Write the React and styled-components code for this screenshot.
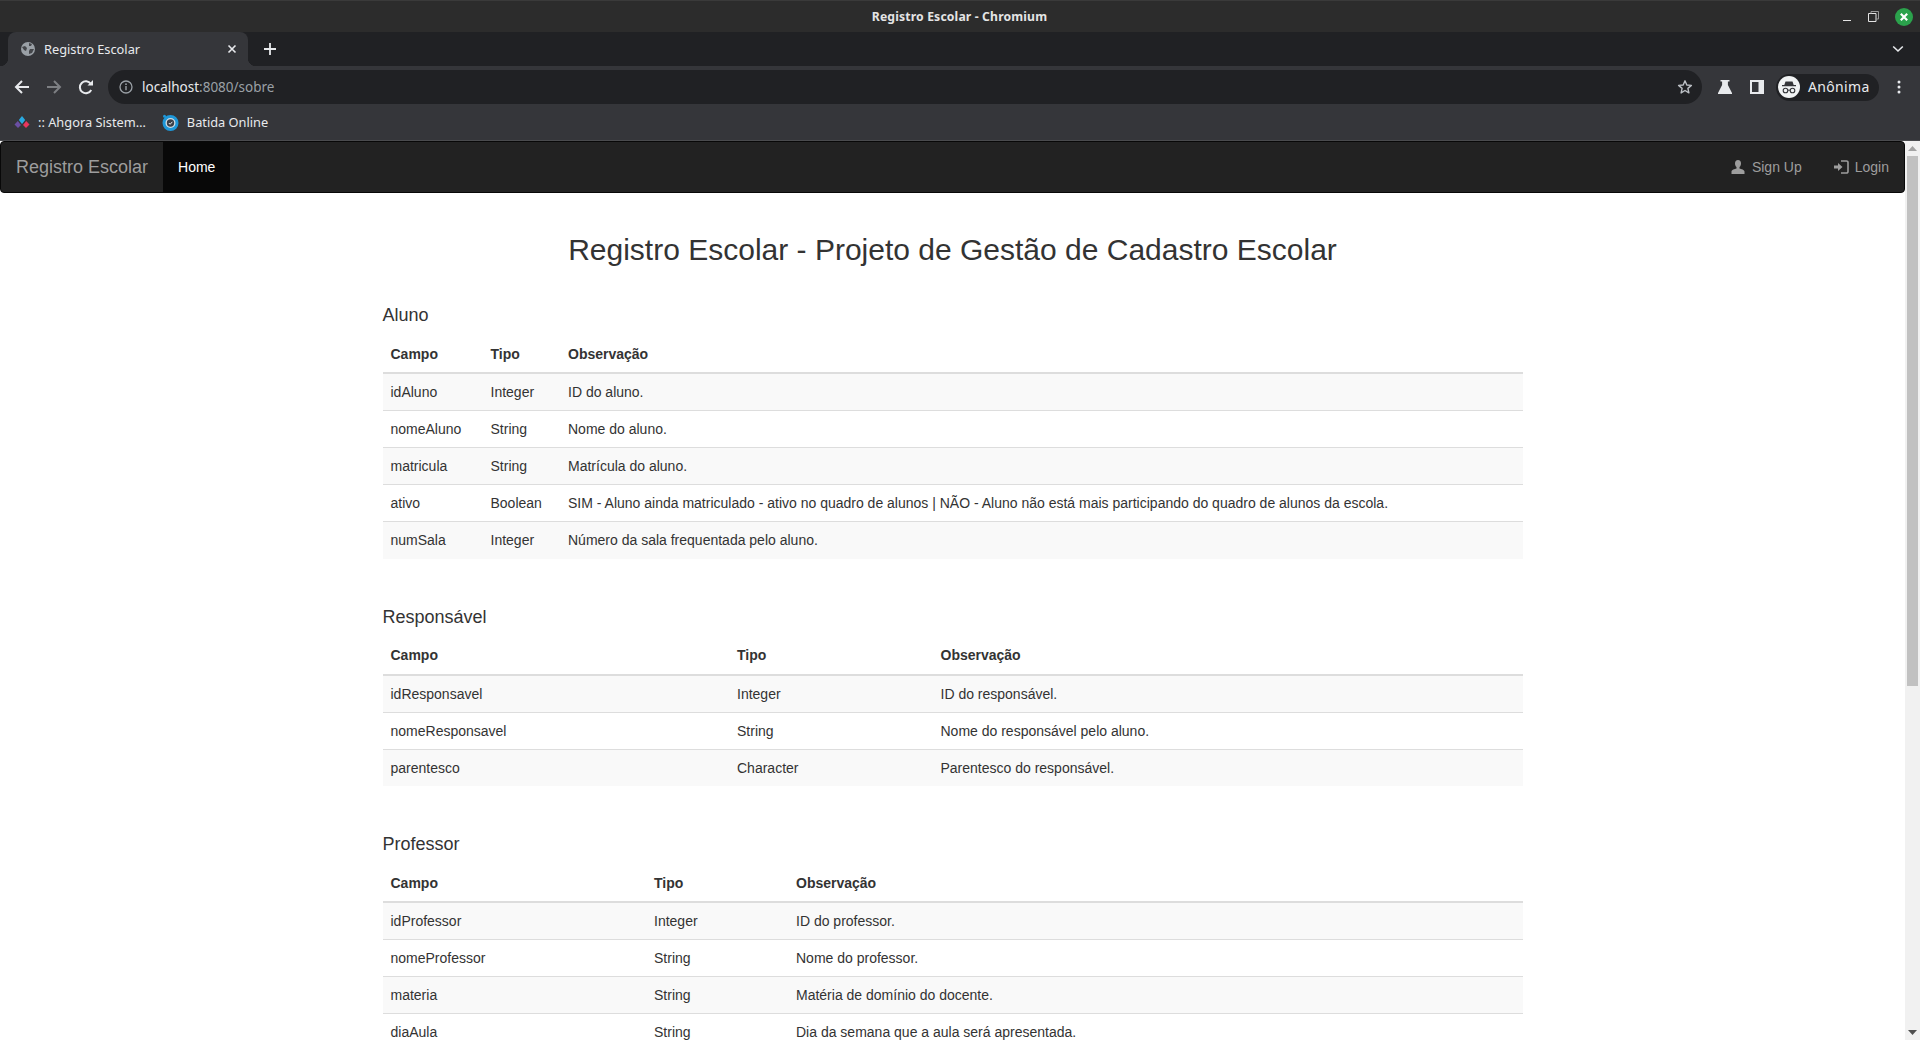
import React from "react";
import styled, { createGlobalStyle } from "styled-components";

const Global = createGlobalStyle`
  html, body { margin: 0; padding: 0; height: 1040px; overflow: hidden; background: #fff; }
  * { box-sizing: border-box; }
`;

const Root = styled.div`
  width: 1920px; height: 1040px; display: flex; flex-direction: column; overflow: hidden;
`;
const UI = `"Noto Sans", "Open Sans", "DejaVu Sans", sans-serif`;

const TitleBar = styled.div`
  height: 32px; flex: none; background: #2c2c2c; border-top: 1px solid #3a3a3a;
  display: grid; grid-template-columns: 1fr auto 1fr; align-items: center;
  color: #e4e4e4; font: 700 12.2px ${UI};
`;
const WindowTitle = styled.div`grid-column: 2; margin-left: -1px; letter-spacing: .15px; padding-bottom: 1px;`;
const WindowButtons = styled.div`
  grid-column: 3; justify-self: end; display: flex; align-items: center; gap: 16px; padding-right: 7px;
`;
const TabStrip = styled.div`
  height: 34px; flex: none; background: #202124; display: flex; align-items: center; padding-left: 8px; padding-right: 16px;
`;
const Tab = styled.div`
  width: 240px; height: 34px; background: #35363a; border-radius: 8px 8px 0 0; position: relative;
  display: flex; align-items: center; padding: 0 11px 0 13px; gap: 9px;
  color: #e8eaed; font: 400 12.8px ${UI};
  &::before, &::after { content: ""; position: absolute; bottom: 0; width: 8px; height: 8px; }
  &::before { left: -8px; background: radial-gradient(circle at 0 0, transparent 8px, #35363a 8.5px); }
  &::after { right: -8px; background: radial-gradient(circle at 100% 0, transparent 8px, #35363a 8.5px); }
`;
const TabLabel = styled.span`flex: 1;`;
const NewTab = styled.div`margin-left: 16px; display: flex;`;
const TabList = styled.div`margin-left: auto; display: flex;`;

const Toolbar = styled.div`
  height: 40px; flex: none; background: #35363a; display: flex; align-items: flex-start; padding: 4px 0 0 6px;
`;
const NavBtn = styled.div`
  width: 32px; height: 34px; display: flex; align-items: center; justify-content: center; flex: none;
`;
const Omnibox = styled.div`
  width: 1594px; margin-left: 6px; height: 34px; flex: none; background: #202124; border-radius: 17px;
  display: flex; align-items: center; padding: 0 9px 1px 11px; font: 400 13.5px ${UI};
`;
const Host = styled.span`color: #e8eaed; margin-left: 9px;`;
const Rest = styled.span`color: #9aa0a6; flex: 1;`;
const ToolIcons = styled.div`display: flex; align-items: center; height: 34px; flex: none; margin-left: 7px;`;
const IconSlot = styled.div`
  width: ${p => p.$w || 32}px; height: 34px; display: flex; align-items: center; justify-content: center; flex: none;
`;
const Profile = styled.div`
  width: 103px; height: 27px; flex: none; background: #202124; border-radius: 14px; margin-left: 3px;
  display: flex; align-items: center; padding: 0 0 1px 2px; gap: 8px; color: #e8eaed; font: 400 14px ${UI}; letter-spacing: .35px;
`;
const Bookmarks = styled.div`
  height: 35px; flex: none; background: #35363a; border-bottom: 1px solid #4a4b4e; display: flex; align-items: center; padding: 0 0 2px 14px;
  color: #e8eaed; font: 400 12.8px ${UI};
`;
const Bookmark = styled.div`
  display: flex; align-items: center; gap: ${p => p.$gap}px; margin-right: ${p => p.$mr || 0}px;
`;

const Viewport = styled.div`flex: 1; min-height: 0; display: flex;`;
const Page = styled.div`
  width: 1905px; overflow: hidden; background: #fff; color: #333;
  font: 400 14px/20px "Liberation Sans", Arial, sans-serif;
`;
const Navbar = styled.nav`
  height: 52px; background: #222; border: 1px solid #080808; border-radius: 4px; margin-bottom: 20px;
  display: flex; align-items: stretch;
`;
const Brand = styled.a`
  padding: 15px; font-size: 18px; line-height: 20px; color: #9d9d9d;
`;
const Active = styled.a`
  padding: 15px; color: #fff; background: #080808; line-height: 20px;
`;
const NavRight = styled.div`margin-left: auto; display: flex;`;
const NavLink = styled.a`
  padding: 15px; color: #9d9d9d; display: flex; align-items: center; gap: ${p => p.$gap}px; line-height: 20px;
  margin-right: ${p => p.$mr || 0}px;
`;
const Container = styled.main`
  width: 1170px; margin: 0 auto; padding: 20px 15px 0;
`;
const Title = styled.h2`
  font: 500 30px/33px "Liberation Sans", Arial, sans-serif; text-align: center; margin: 0 0 39px; color: #333;
`;
const Section = styled.section`
  margin-bottom: 48px;
`;
const SectionTitle = styled.h4`
  font: 500 18px/20px "Liberation Sans", Arial, sans-serif; margin: 0 0 10px; color: #333;
`;
const Table = styled.table`
  width: 100%; border-collapse: collapse; border-spacing: 0; table-layout: fixed;
`;
const Th = styled.th`
  text-align: left; padding: 8px; font-weight: 700; border-bottom: 2px solid #ddd; height: 38px;
  width: ${p => (p.$w ? `${p.$w}px` : "auto")};
`;
const Tr = styled.tr`
  &:nth-child(odd) { background: #f9f9f9; }
`;
const Td = styled.td`
  padding: 8px; border-top: 1px solid #ddd; height: 37px;
  tr:first-child > & { border-top: 0; height: 36px; }
`;

const Scrollbar = styled.div`
  width: 15px; flex: none; background: #f1f1f1; display: flex; flex-direction: column; align-items: center;
`;
const ArrowBox = styled.div`height: 15px; flex: none; display: flex; align-items: center; justify-content: center;`;
const Thumb = styled.div`width: 11px; height: 530px; background: #c1c1c1; flex: none;`;
const Spacer = styled.div`flex: 1;`;

const Globe = () => (
  <svg width="14" height="14" viewBox="0 0 14 14">
    <circle cx="7" cy="7" r="7" fill="#9aa0a6" />
    <path d="M1 5 L4 4 L6 6 L5 9 L3 8 Z M8 1 L11 2 L10 4 L8 4 Z M9 7 L13 7 L11 11 L8 12 L8 9 Z" fill="#35363a" opacity=".85" />
  </svg>
);
const Arrow = ({ color, flip }) => (
  <svg width="16" height="16" viewBox="0 0 16 16" style={flip ? { transform: "scaleX(-1)" } : undefined}>
    <path d="M15 8H2M8 2 2 8l6 6" stroke={color} strokeWidth="2" fill="none" />
  </svg>
);
const Reload = () => (
  <svg width="16" height="16" viewBox="0 0 16 16">
    <path d="M13.2 11a6 6 0 1 1-.4-6.2" stroke="#e8eaed" strokeWidth="2" fill="none" />
    <path d="M9.5 6.5H15V1z" fill="#e8eaed" />
  </svg>
);
const Info = () => (
  <svg width="14" height="14" viewBox="0 0 14 14">
    <circle cx="7" cy="7" r="6" stroke="#9aa0a6" strokeWidth="1.3" fill="none" />
    <path d="M7 6v4.2" stroke="#9aa0a6" strokeWidth="1.4" />
    <circle cx="7" cy="4.2" r=".9" fill="#9aa0a6" />
  </svg>
);
const Star = () => (
  <svg width="16" height="16" viewBox="0 0 16 16">
    <path d="M8 1.8l1.8 4.2 4.6.4-3.5 3 1 4.5L8 11.5l-3.900 2.400 1-4.500-3.500-3 4.600-.4z" stroke="#bdc1c6" strokeWidth="1.4" fill="none" strokeLinejoin="round" />
  </svg>
);
const Flask = () => (
  <svg width="16" height="16" viewBox="0 0 16 16">
    <path d="M3.500 1h9v1.500h-1.600v3.600L15 14v1H1v-1l4.100-7.900V2.500H3.500z" fill="#e8eaed" />
  </svg>
);
const SidePanel = () => (
  <svg width="14" height="14" viewBox="0 0 14 14">
    <path d="M0 0h14v14H0z" fill="#e8eaed" />
    <path d="M2 2h6.500v10H2z" fill="#35363a" />
  </svg>
);
const Incognito = () => (
  <svg width="22" height="22" viewBox="0 0 22 22">
    <circle cx="11" cy="11" r="11" fill="#f1f3f4" />
    <path d="M7.500 5.500h7l1.200 3.600H18v1.100H4V9.100h2.300z" fill="#35363a" />
    <circle cx="7.500" cy="14.500" r="2.300" stroke="#35363a" strokeWidth="1.100" fill="none" />
    <circle cx="14.500" cy="14.500" r="2.300" stroke="#35363a" strokeWidth="1.100" fill="none" />
    <path d="M9.800 14.200h2.400" stroke="#35363a" strokeWidth="1" />
  </svg>
);
const Kebab = () => (
  <svg width="4" height="14" viewBox="0 0 4 14">
    <circle cx="2" cy="2" r="1.500" fill="#e8eaed" /><circle cx="2" cy="7" r="1.500" fill="#e8eaed" /><circle cx="2" cy="12" r="1.500" fill="#e8eaed" />
  </svg>
);
const Plus = () => (
  <svg width="12" height="12" viewBox="0 0 12 12"><path d="M6 0v12M0 6h12" stroke="#e8eaed" strokeWidth="1.800" /></svg>
);
const CloseX = () => (
  <svg width="10" height="10" viewBox="0 0 10 10"><path d="M1.500 1.500l7 7M8.500 1.500l-7 7" stroke="#e8eaed" strokeWidth="1.600" /></svg>
);
const Chevron = () => (
  <svg width="12" height="8" viewBox="0 0 12 8"><path d="M1.200 1.500 6 6l4.800-4.500" stroke="#e8eaed" strokeWidth="1.600" fill="none" /></svg>
);
const Minimize = () => (
  <svg width="10" height="10" viewBox="0 0 10 10"><path d="M1 8.500h8" stroke="#e4e4e4" strokeWidth="1" /></svg>
);
const Restore = () => (
  <svg width="11" height="11" viewBox="0 0 11 11">
    <path d="M.5 2.500h7.500v8H.5z" stroke="#e4e4e4" fill="none" />
    <path d="M3 2.500V.5h7.500v7.500H8" stroke="#9a9a9a" fill="none" />
  </svg>
);
const GreenClose = () => (
  <svg width="18" height="18" viewBox="0 0 18 18">
    <circle cx="9" cy="9" r="9" fill="#2ba24c" />
    <path d="M5.800 5.800l6.400 6.400M12.200 5.800l-6.400 6.400" stroke="#fff" strokeWidth="2.200" />
  </svg>
);
const Ahgora = () => (
  <svg width="16" height="14" viewBox="0 0 16 14">
    <path d="M8 1l3.200 4-3.200 4-3.200-4z" fill="#29a9e0" />
    <path d="M3.800 6 7 10 4 13 .5 9.500z" fill="#6a4fa3" />
    <path d="M12.200 6 15.500 9.500 12 13 9 10z" fill="#e8365d" />
  </svg>
);
const Batida = () => (
  <svg width="17" height="17" viewBox="0 0 17 17">
    <circle cx="8.500" cy="9" r="6.500" stroke="#1e97d8" strokeWidth="3" fill="#d5dde3" />
    <circle cx="2.500" cy="2.200" r="1.500" fill="#1e97d8" />
    <circle cx="8.500" cy="9" r="3.700" fill="#3a3f47" />
    <path d="M6.800 9l1.300 1.300 2.300-2.500" stroke="#e8eaed" strokeWidth="1" fill="none" />
  </svg>
);
const UserGlyph = () => (
  <svg width="14" height="14" viewBox="0 0 14 14">
    <path d="M7 0c2 0 3 1.500 3 3.500 0 1.500-.6 2.900-1.500 3.600v1.300c1.800.6 5 1.300 5 3.100V14H.5v-2.500c0-1.800 3.200-2.500 5-3.100V7.100C4.600 6.400 4 5 4 3.500 4 1.500 5 0 7 0z" fill="#9d9d9d" />
  </svg>
);
const LoginGlyph = () => (
  <svg width="15" height="14" viewBox="0 0 15 14">
    <path d="M0 5.500h4V3l4.500 4L4 11V8.500H0z" fill="#9d9d9d" />
    <path d="M7 1h5.500A1.500 1.500 0 0 1 14 2.500v9a1.500 1.500 0 0 1-1.500 1.500H7" stroke="#9d9d9d" strokeWidth="1.600" fill="none" />
  </svg>
);
const SbArrow = ({ down, color }) => (
  <svg width="9" height="5" viewBox="0 0 9 5">
    <path d={down ? "M0 0h9L4.500 5z" : "M0 5h9L4.500 0z"} fill={color} />
  </svg>
);

const sections = [
  {
    title: "Aluno", w: [100, 77.5],
    rows: [
      ["idAluno", "Integer", "ID do aluno."],
      ["nomeAluno", "String", "Nome do aluno."],
      ["matricula", "String", "Matrícula do aluno."],
      ["ativo", "Boolean", "SIM - Aluno ainda matriculado - ativo no quadro de alunos | NÃO - Aluno não está mais participando do quadro de alunos da escola."],
      ["numSala", "Integer", "Número da sala frequentada pelo aluno."],
    ],
  },
  {
    title: "Responsável", w: [346.5, 203.5],
    rows: [
      ["idResponsavel", "Integer", "ID do responsável."],
      ["nomeResponsavel", "String", "Nome do responsável pelo aluno."],
      ["parentesco", "Character", "Parentesco do responsável."],
    ],
  },
  {
    title: "Professor", w: [263.5, 142],
    rows: [
      ["idProfessor", "Integer", "ID do professor."],
      ["nomeProfessor", "String", "Nome do professor."],
      ["materia", "String", "Matéria de domínio do docente."],
      ["diaAula", "String", "Dia da semana que a aula será apresentada."],
    ],
  },
];

export default function App() {
  return (
    <Root>
      <Global />
      <TitleBar>
        <WindowTitle>Registro Escolar - Chromium</WindowTitle>
        <WindowButtons><Minimize /><Restore /><GreenClose /></WindowButtons>
      </TitleBar>
      <TabStrip>
        <Tab><Globe /><TabLabel>Registro Escolar</TabLabel><CloseX /></Tab>
        <NewTab><Plus /></NewTab>
        <TabList><Chevron /></TabList>
      </TabStrip>
      <Toolbar>
        <NavBtn><Arrow color="#e8eaed" /></NavBtn>
        <NavBtn><Arrow color="#7d7f83" flip /></NavBtn>
        <NavBtn><Reload /></NavBtn>
        <Omnibox>
          <Info />
          <Host>localhost</Host><Rest>:8080/sobre</Rest>
          <Star />
        </Omnibox>
        <ToolIcons>
          <IconSlot><Flask /></IconSlot>
          <IconSlot><SidePanel /></IconSlot>
          <Profile><Incognito />Anônima</Profile>
          <IconSlot $w={40}><Kebab /></IconSlot>
        </ToolIcons>
      </Toolbar>
      <Bookmarks>
        <Bookmark $gap={8} $mr={16}><Ahgora />:: Ahgora Sistem…</Bookmark>
        <Bookmark $gap={8}><Batida />Batida Online</Bookmark>
      </Bookmarks>
      <Viewport>
        <Page>
          <Navbar>
            <Brand>Registro Escolar</Brand>
            <Active>Home</Active>
            <NavRight>
              <NavLink $gap={7} $mr={2}><UserGlyph />Sign Up</NavLink>
              <NavLink $gap={6}><LoginGlyph />Login</NavLink>
            </NavRight>
          </Navbar>
          <Container>
            <Title>Registro Escolar - Projeto de Gestão de Cadastro Escolar</Title>
            {sections.map(s => (
              <Section key={s.title}>
                <SectionTitle>{s.title}</SectionTitle>
                <Table>
                  <thead>
                    <tr><Th $w={s.w[0]}>Campo</Th><Th $w={s.w[1]}>Tipo</Th><Th>Observação</Th></tr>
                  </thead>
                  <tbody>
                    {s.rows.map(r => (
                      <Tr key={r[0]}><Td>{r[0]}</Td><Td>{r[1]}</Td><Td>{r[2]}</Td></Tr>
                    ))}
                  </tbody>
                </Table>
              </Section>
            ))}
          </Container>
        </Page>
        <Scrollbar>
          <ArrowBox><SbArrow color="#a3a3a3" /></ArrowBox>
          <Thumb />
          <Spacer />
          <ArrowBox><SbArrow down color="#505050" /></ArrowBox>
        </Scrollbar>
      </Viewport>
    </Root>
  );
}
